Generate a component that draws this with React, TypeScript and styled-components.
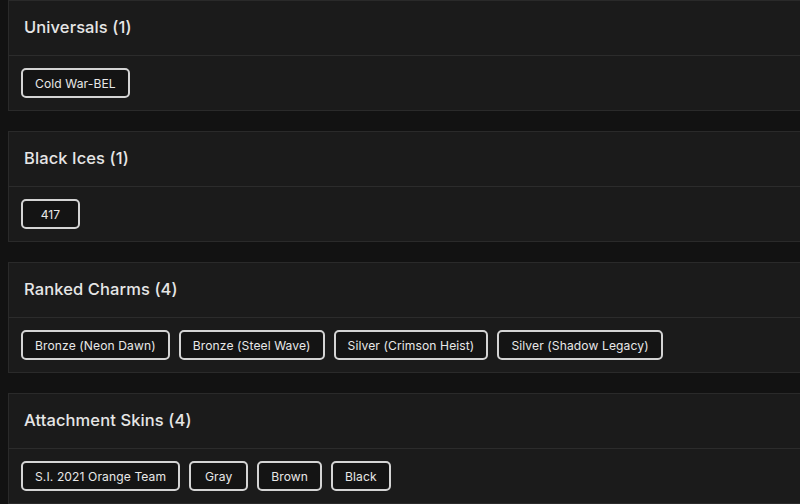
import React from "react";
import styled, { createGlobalStyle } from "styled-components";

const Global = createGlobalStyle`
  html, body { margin: 0; padding: 0; background: #121212; overflow: hidden; }
  body { font-family: Inter, "Open Sans", sans-serif; }
`;

const Page = styled.div`
  padding: 0 0 0 8px;
  display: flex;
  flex-direction: column;
  gap: 20px;
`;

const Card = styled.section`
  width: 820px;
  background: #1b1b1b;
  border: 1px solid #2a2a2a;
  box-sizing: border-box;
`;

const Header = styled.div`
  height: 55px;
  display: flex;
  align-items: center;
  padding: 0 15px 3px;
  border-bottom: 1px solid #2c2c2c;
  box-sizing: border-box;
`;

const Title = styled.h3`
  margin: 0;
  font-size: 16.5px;
  font-weight: 500;
  color: #e6e6e6;
  letter-spacing: 0.1px;
`;

const Body = styled.div`
  display: flex;
  flex-wrap: wrap;
  gap: 9px;
  padding: 12px;
  height: 54px;
  box-sizing: border-box;
`;

const Chip = styled.span`
  display: inline-flex;
  align-items: center;
  justify-content: center;
  min-width: 59px;
  height: 30px;
  box-sizing: border-box;
  padding: 0 12px;
  border: 2px solid #d4d4d4;
  border-radius: 5px;
  background: #141414;
  color: #e8e8e8;
  font-size: 12.1px;
  letter-spacing: 0.1px;
  white-space: nowrap;
`;

const sections: { title: string; items: string[] }[] = [
  { title: "Universals", items: ["Cold War-BEL"] },
  { title: "Black Ices", items: ["417"] },
  {
    title: "Ranked Charms",
    items: [
      "Bronze (Neon Dawn)",
      "Bronze (Steel Wave)",
      "Silver (Crimson Heist)",
      "Silver (Shadow Legacy)",
    ],
  },
  {
    title: "Attachment Skins",
    items: ["S.I. 2021 Orange Team", "Gray", "Brown", "Black"],
  },
];

export default function App() {
  return (
    <>
      <Global />
      <Page>
        {sections.map((s) => (
          <Card key={s.title}>
            <Header>
              <Title>
                {s.title} ({s.items.length})
              </Title>
            </Header>
            <Body>
              {s.items.map((i) => (
                <Chip key={i}>{i}</Chip>
              ))}
            </Body>
          </Card>
        ))}
      </Page>
    </>
  );
}
